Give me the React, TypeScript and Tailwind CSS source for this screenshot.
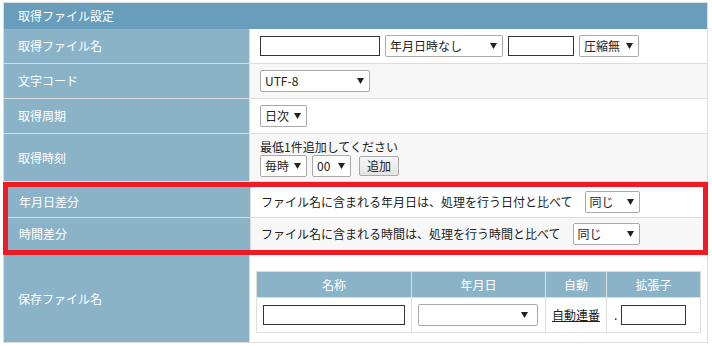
import type { ReactNode } from "react";

const font = { fontFamily: "'Noto Sans CJK JP', 'Noto Sans', sans-serif" };

function Caret() {
  return (
    <svg width="7" height="6" viewBox="0 0 7 6" className="shrink-0">
      <path d="M0 0h7L3.5 6z" fill="#222" />
    </svg>
  );
}

function FakeSelect({ value, className }: { value: string; className: string }) {
  return (
    <div
      className={`flex h-[22px] items-center justify-between rounded-[2px] border border-[#a9a9a9] bg-white pl-[4px] pr-[5px] text-[12px] leading-none text-[#222] ${className}`}
    >
      <span>{value}</span>
      <Caret />
    </div>
  );
}

function TextBox({ className }: { className: string }) {
  return <div className={`h-[20px] border border-[#333] bg-white ${className}`} />;
}

function Row({
  label,
  children,
  className,
  labelClass = "w-[246px] pl-[14px]",
  last = false,
}: {
  label: string;
  children: ReactNode;
  className: string;
  labelClass?: string;
  last?: boolean;
}) {
  return (
    <div className={`flex ${last ? "" : "border-b border-[#ddd]"} ${className}`}>
      <div
        className={`flex shrink-0 items-center border-r border-[#ddd] bg-[#8bb3c8] text-[12px] text-white ${labelClass}`}
      >
        {label}
      </div>
      {children}
    </div>
  );
}

export default function App() {
  return (
    <div className="h-[346px] w-[712px] bg-white pl-[3px] pt-[2px]" style={font}>
      <div className="w-[705px] border border-[#ddd] text-[#222]">
        <div className="flex h-[26px] items-center bg-[#689ebb] pl-[14px] text-[12px] text-white">
          取得ファイル設定
        </div>

        <Row label="取得ファイル名" className="h-[35px] bg-white">
          <div className="flex flex-1 items-center gap-[5px] pl-[10px]">
            <TextBox className="w-[120px]" />
            <FakeSelect value="年月日時なし" className="w-[118px]" />
            <TextBox className="w-[66px]" />
            <FakeSelect value="圧縮無" className="w-[60px]" />
          </div>
        </Row>

        <Row label="文字コード" className="h-[35px] bg-[#f7f7f7]">
          <div className="flex flex-1 items-center pl-[10px]">
            <FakeSelect value="UTF-8" className="w-[110px]" />
          </div>
        </Row>

        <Row label="取得周期" className="h-[35px] bg-white">
          <div className="flex flex-1 items-center pl-[10px]">
            <FakeSelect value="日次" className="w-[47px]" />
          </div>
        </Row>

        <Row label="取得時刻" className="h-[48px] bg-[#f7f7f7]">
          <div className="flex flex-1 flex-col justify-center pl-[10px] pt-[1px]">
            <p className="text-[12px] leading-[16px]">最低1件追加してください</p>
            <div className="flex items-center gap-[5px]">
              <FakeSelect value="毎時" className="w-[47px]" />
              <FakeSelect value="00" className="w-[39px]" />
              <button className="ml-[3px] h-[20px] w-[40px] rounded-[2px] border border-[#a9a9a9] bg-gradient-to-b from-[#f6f6f6] to-[#e4e4e4] text-[12px] leading-none text-[#222]">
                追加
              </button>
            </div>
          </div>
        </Row>

        <div className="-mx-px border-[5px] border-[#ed1c24]">
          <Row label="年月日差分" className="h-[31px] bg-white" labelClass="w-[243px] pl-[11px]">
            <div className="flex flex-1 items-center pl-[10px] text-[12px]">
              <span>ファイル名に含まれる年月日は、処理を行う日付と比べて</span>
              <FakeSelect value="同じ" className="ml-[12px] w-[55px]" />
            </div>
          </Row>
          <Row label="時間差分" className="h-[32px] bg-[#f7f7f7]" labelClass="w-[243px] pl-[11px]" last>
            <div className="flex flex-1 items-center pl-[10px] text-[12px]">
              <span>ファイル名に含まれる時間は、処理を行う時間と比べて</span>
              <FakeSelect value="同じ" className="ml-[12px] w-[67px]" />
            </div>
          </Row>
        </div>

        <Row label="保存ファイル名" className="h-[87px] bg-white" last>
          <div className="flex flex-1 items-start pl-[6px] pt-[16px]">
            <table className="border-collapse text-[12px]">
              <thead>
                <tr className="h-[26px] bg-[#8bb3c8] text-white">
                  <th className="w-[155px] border border-[#ddd] font-normal">名称</th>
                  <th className="w-[134px] border border-[#ddd] font-normal">年月日</th>
                  <th className="w-[61px] border border-[#ddd] font-normal">自動</th>
                  <th className="w-[94px] border border-[#ddd] font-normal">拡張子</th>
                </tr>
              </thead>
              <tbody>
                <tr className="h-[35px]">
                  <td className="border border-[#ddd] pl-[6px]">
                    <TextBox className="w-[142px]" />
                  </td>
                  <td className="border border-[#ddd] pl-[6px]">
                    <FakeSelect value="" className="w-[120px] pr-[9px]" />
                  </td>
                  <td className="border border-[#ddd] text-center">
                    <a href="#" className="underline">
                      自動連番
                    </a>
                  </td>
                  <td className="border border-[#ddd] pl-[7px]">
                    <div className="flex items-center gap-[4px]">
                      <span>.</span>
                      <TextBox className="w-[65px]" />
                    </div>
                  </td>
                </tr>
              </tbody>
            </table>
          </div>
        </Row>
      </div>
    </div>
  );
}
